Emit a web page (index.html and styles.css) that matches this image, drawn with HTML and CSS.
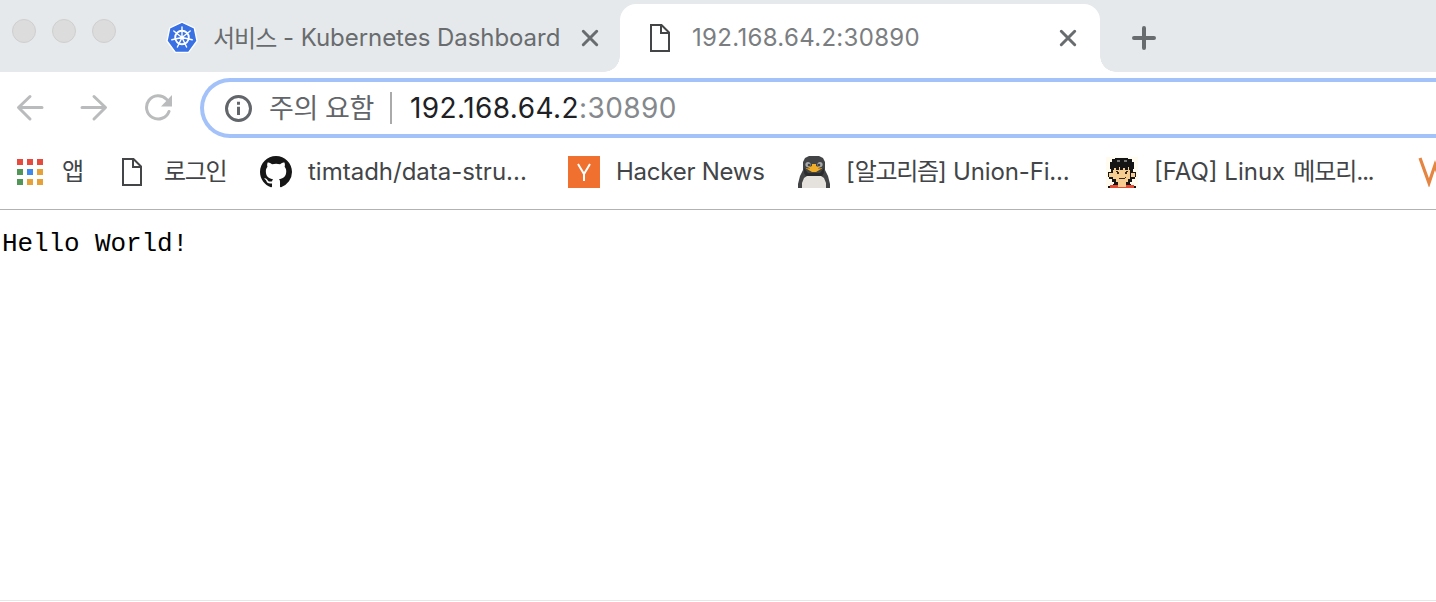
FILE: index.html
```html
<!DOCTYPE html>
<html lang="ko">
<head>
<meta charset="utf-8">
<title>192.168.64.2:30890</title>
<link rel="stylesheet" href="styles.css">
</head>
<body>
<header class="tab-strip">
  <div class="window-controls"><span class="light"></span><span class="light"></span><span class="light"></span></div>
  <div class="tab">
    <svg class="tab-favicon" width="32" height="34" viewBox="0 0 32 34">
      <path d="M16 1.200 28.300 7 31 20 22.600 31.300H9.400L1 20 3.700 7Z" fill="#3970e4" stroke="#fff" stroke-width="1.300" stroke-linejoin="round"/>
      <g fill="none" stroke="#fff" stroke-linecap="round">
        <circle cx="16" cy="16.500" r="6.800" stroke-width="1.900"/>
        <path stroke-width="1.400" d="M16 16.500V6M16 16.500 24.200 10M16 16.500 26.200 18.800M16 16.500 20.600 26M16 16.500 11.400 26M16 16.500 5.800 18.800M16 16.500 7.800 10"/>
        <circle cx="16" cy="16.500" r="1.300" stroke-width="1"/>
      </g>
    </svg>
    <div class="tab-title"><span class="ko">서비스</span><span class="latin">- Kubernetes Dashboard</span></div>
    <svg class="close" width="20" height="20" viewBox="0 0 20 20"><path d="M3.300 3.300 16.700 16.700M16.700 3.300 3.300 16.700"/></svg>
  </div>
  <div class="tab active">
    <svg class="doc" width="22" height="30" viewBox="0 0 22 30"><path d="M2 2H12.500L20 9.500V28H2ZM12 2V10H20"/></svg>
    <div class="tab-title"><span class="latin">192.168.64.2:30890</span></div>
    <svg class="close" width="20" height="20" viewBox="0 0 20 20"><path d="M3.300 3.300 16.700 16.700M16.700 3.300 3.300 16.700"/></svg>
  </div>
  <svg class="new-tab" width="26" height="26" viewBox="0 0 26 26"><path d="M13 3V23M3 13H23"/></svg>
</header>
<nav class="toolbar">
  <svg class="nav-icon" width="28" height="28" viewBox="0 0 28 28"><path d="M26 13.500H3M14 2.500 2.500 13.500 14 25"/></svg>
  <svg class="nav-icon" width="28" height="28" viewBox="0 0 28 28"><path d="M2 13.500H25M14 2.500 25.500 13.500 14 25"/></svg>
  <svg class="nav-icon" width="30" height="28" viewBox="0 0 30 28"><path d="M22.500 5.300A11.600 11.600 0 1 0 25 17.500"/><path class="tip" d="M28 1V12.500H17Z"/></svg>
  <div class="omnibox">
    <svg class="info" width="28" height="28" viewBox="0 0 28 28"><circle cx="14.500" cy="14.500" r="12"/><path d="M14.500 12.800V21M14.500 7.700V10.700"/></svg>
    <span class="warning">주의 요함</span>
    <span class="divider"></span>
    <span class="url"><span class="host">192.168.64.2</span><span class="port">:30890</span></span>
  </div>
</nav>
<nav class="bookmarks">
  <a class="mark apps">
    <svg width="26" height="26" viewBox="0 0 26 26"><path fill="#e64b3d" d="M0 0h6v6H0zM10 0h6v6h-6zM20 0h6v6h-6z"/><path fill="#519657" d="M0 10h6v6H0zM0 20h6v6H0z"/><path fill="#3d89ee" d="M10 10h6v6h-6z"/><path fill="#e7a139" d="M20 10h6v6h-6zM10 20h6v6h-6zM20 20h6v6h-6z"/></svg>
    <span class="ko">앱</span>
  </a>
  <a class="mark login">
    <svg class="doc" width="22" height="30" viewBox="0 0 22 30"><path d="M2 2H12.500L20 9.500V28H2ZM12 2V10H20"/></svg>
    <span class="ko">로그인</span>
  </a>
  <a class="mark github">
    <svg width="32" height="32" viewBox="0 0 16 16"><path fill="#161616" d="M8 0C3.580 0 0 3.580 0 8c0 3.540 2.290 6.530 5.470 7.590.4.070.55-.17.55-.38 0-.19-.01-.82-.01-1.490-2.010.37-2.530-.49-2.690-.94-.09-.23-.48-.94-.82-1.130-.28-.15-.68-.52-.01-.53.63-.01 1.080.58 1.230.82.72 1.210 1.870.87 2.330.66.07-.52.28-.87.51-1.070-1.780-.2-3.640-.89-3.640-3.950 0-.87.31-1.590.82-2.150-.08-.2-.36-1.020.08-2.120 0 0 .67-.21 2.200.82.64-.18 1.320-.27 2-.27s1.360.09 2 .27c1.530-1.040 2.200-.82 2.200-.82.44 1.100.16 1.920.08 2.120.51.56.82 1.270.82 2.150 0 3.070-1.870 3.750-3.650 3.950.29.25.54.73.54 1.480 0 1.070-.01 1.930-.01 2.200 0 .21.15.46.55.38A8.010 8.010 0 0 0 16 8c0-4.420-3.580-8-8-8Z"/></svg>
    <span class="latin">timtadh/data-stru...</span>
  </a>
  <a class="mark hn">
    <svg width="32" height="32" viewBox="0 0 32 32"><path fill="#f07030" d="M0 0h32v32H0z"/><path fill="none" stroke="#fff" stroke-width="2" d="M10 8 16 18 22 8M16 17.500V25"/></svg>
    <span class="latin">Hacker News</span>
  </a>
  <a class="mark union">
    <svg width="32" height="32" viewBox="0 0 32 32">
      <path fill="#424446" d="M11 0H21L25 2 27 6V14L30 20 32 28V32H0V28L2 20 5 14V6L7 2Z"/>
      <path fill="#292b2c" d="M6 12 10 17H22L26 12V17L24 20H8L6 17Z"/>
      <path fill="#e5e1dc" d="M9 20H23L26 22 28 27V32H4V27L6 22Z"/>
      <circle cx="10" cy="8.500" r="2.600" fill="#a7a9aa"/><circle cx="22" cy="8.500" r="2.600" fill="#a7a9aa"/>
      <circle cx="11" cy="9" r="1.300" fill="#424446"/><circle cx="21" cy="9" r="1.300" fill="#424446"/>
      <path fill="#eeae29" d="M14 8H18V10L23 12V13L18 16H14L9 13V12L14 10Z"/>
      <path fill="#b9811f" d="M8 12h4v1H8zM20 12h4v1h-4z"/>
    </svg>
    <span class="latin">[</span><span class="ko">알고리즘</span><span class="latin tail">] Union-Fi...</span>
  </a>
  <a class="mark linux">
    <svg width="32" height="32" viewBox="0 0 32 32" shape-rendering="crispEdges">
      <path fill="#fffcef" d="M0 1h32v31H0z"/>
      <path fill="#151515" d="M9 2h13v1h4v3h2v7h-1v3h3v5h-1v2h-3v3h-2v2h-4v3h-8v-3H8v-2H6v-3H3v-2H2v-5h3v-3H4V6h2V3h3z"/>
      <path fill="#f6cc91" d="M3 17h4v4H3zM25 17h4v4h-4zM7 14h1v-2h2v2h3v-3h1v3h3v-2h2v2h3v-3h1v3h1v9h-2v3H10v-3H7z"/>
      <path fill="#777" d="M11 4h3v2h-3zM18 4h3v2h-3z"/>
      <path fill="#33251b" d="M10 15h2v1h-2zM11 16h2v2h-2zM20 15h2v1h-2zM19 16h2v2h-2zM13 22h6v1h-6zM19 21h1v1h-1z"/>
      <path fill="#f6cc91" d="M12 26h8v5h-8z"/>
      <path fill="#e54a31" d="M4 29h8v3H4zM20 29h8v3h-8zM12 31h8v1h-8z"/>
      <path fill="#151515" d="M2 30h2v2H2zM28 30h2v2h-2zM7 28h5v1H7zM20 28h5v1h-5z"/>
    </svg>
    <span class="latin">[FAQ] Linux</span><span class="ko">메모리...</span>
  </a>
  <a class="mark more"><svg width="34" height="30" viewBox="0 0 34 30"><path fill="none" stroke="#e58542" stroke-width="3.200" d="M2 1 11 26 17 8 23 26 32 1"/></svg></a>
</nav>
<main class="page"><pre class="output">Hello World!</pre></main>
</body>
</html>
```
FILE: styles.css
```css
* { box-sizing: border-box; }
body {
  margin: 0;
  width: 1436px;
  height: 602px;
  overflow: hidden;
  display: flex;
  flex-direction: column;
  background: #fff;
  font-family: Inter, "Noto Sans CJK KR", sans-serif;
  white-space: nowrap;
}
svg { display: block; flex: none; }
.ko { font-family: "Noto Sans CJK KR", sans-serif; padding-bottom: 3px; }

.tab-strip { display: flex; height: 72px; flex: none; background: #e5e9ec; color: #696c6e; font-size: 24px; }
.window-controls { display: flex; gap: 16px; padding: 19px 0 0 12px; width: 150px; }
.light { width: 24px; height: 24px; border: 1px solid #cfcfcf; border-radius: 50%; background: #dcdcdc; }
.tab { display: flex; align-items: center; width: 470px; height: 68px; margin-top: 4px; padding: 0 20px 0 16px; }
.tab-title { display: flex; flex: 1; gap: 7px; margin-left: 15px; line-height: 34px; }
.tab-title .ko { font-size: 24px; line-height: 32px; letter-spacing: -1px; width: 63px; }
.tab .latin { letter-spacing: -0.05px; }
.tab.active { position: relative; width: 480px; padding: 0 22px 0 29px; background: #fff; border-radius: 16px 16px 0 0; color: #7b7e81; }
.tab.active .tab-title { margin-left: 21px; }
.tab.active .latin { letter-spacing: 0.320px; }
.tab.active::before, .tab.active::after { content: ""; position: absolute; bottom: 0; width: 16px; height: 16px; }
.tab.active::before { left: -16px; background: radial-gradient(circle at 0 0, transparent 15.500px, #fff 16px); }
.tab.active::after { right: -16px; background: radial-gradient(circle at 100% 0, transparent 15.500px, #fff 16px); }
.close, .new-tab { fill: none; stroke: #696c6e; stroke-width: 3; stroke-linecap: round; }
.new-tab { margin: 25px 0 0 31px; stroke-width: 4; }
.doc { fill: none; stroke: #444546; stroke-width: 2; }

.toolbar { display: flex; align-items: center; height: 72px; flex: none; padding-left: 16px; gap: 36px; }
.nav-icon { fill: none; stroke: #babbbc; stroke-width: 3; stroke-linecap: round; stroke-linejoin: round; }
.nav-icon .tip { fill: #babbbc; stroke: none; }
.omnibox { display: flex; align-items: center; flex: 1; height: 60px; margin-left: -10px; padding-left: 20px; border: 4px solid #a4c2fa; border-right: 0; border-radius: 30px 0 0 30px; }
.info { fill: none; stroke: #62666a; stroke-width: 3; overflow: visible; }
.warning { width: 107px; margin-left: 17px; padding-bottom: 2px; font: 27px/40px "Noto Sans CJK KR", sans-serif; letter-spacing: -0.400px; color: #62666a; }
.divider { width: 2px; height: 32px; margin: 0 18px 0 14px; background: #aaa; }
.url { font-size: 28px; line-height: 40px; letter-spacing: 0.420px; color: #202124; }
.port { color: #85898d; }

.bookmarks { display: flex; align-items: center; height: 66px; flex: none; padding: 0 0 10px 16px; border-bottom: 1px solid #b2b2b2; font-size: 24px; line-height: 36px; color: #424548; overflow: hidden; }
.mark { display: flex; align-items: center; flex: none; height: 36px; }
.mark .ko { letter-spacing: -1.300px; }
.apps { width: 105px; gap: 19px; padding-left: 1px; }
.login { width: 139px; gap: 21px; }
.github { width: 308px; gap: 16px; }
.hn { width: 230px; gap: 16px; letter-spacing: -0.250px; }
.union { width: 308px; }
.union svg { margin-right: 16px; }
.union .tail { letter-spacing: -0.150px; }
.linux svg { margin-right: 16px; }
.linux { width: 312px; }
.linux .ko { margin-left: 8px; letter-spacing: -1px; }

.page { flex: 1; margin-bottom: 1px; border-bottom: 1px solid #e7e7e7; }
.output { margin: 19px 0 0 2px; font: 26px/30px "Liberation Mono", monospace; letter-spacing: -0.100px; color: #000; }
```
